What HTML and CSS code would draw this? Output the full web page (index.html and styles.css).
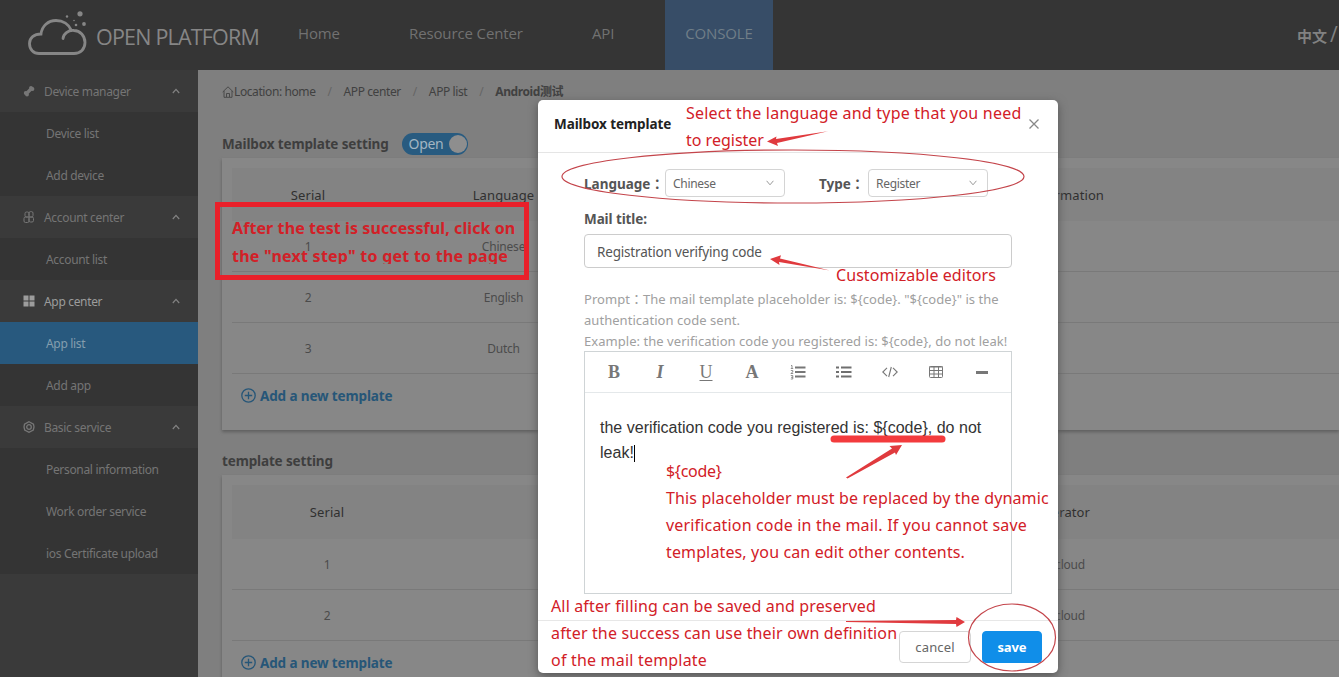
FILE: index.html
```
<!DOCTYPE html>
<html lang="en">
<head>
<meta charset="utf-8">
<title>Open Platform - Mailbox template</title>
<link rel="stylesheet" href="styles.css">
</head>
<body>
<div class="page">
  <header class="top">
    <svg class="logo" width="60" height="46" viewBox="0 0 60 46" fill="none" stroke="#868686" stroke-width="2.800" stroke-linecap="round">
      <path d="M35 26.500C35.500 22 40 18 46 18.500C52 18.500 57 24 57 30.500C57 37 52.500 41.500 46 41.500H11C5.500 41.500 1.500 37.500 1.500 31.500C1.500 26 6 22 13 22C14 14 20 8.500 28 8.500C35 8.500 41 12.500 43.500 18.500"/>
      <g fill="#868686" stroke="none"><circle cx="52" cy="1.800" r="2.600"/><circle cx="56" cy="12" r="1.900"/><circle cx="48" cy="13" r="1.300"/><circle cx="39" cy="4.500" r="1.200"/><circle cx="46" cy="8.500" r=".8"/></g>
    </svg>
    <span class="brand">OPEN PLATFORM</span>
    <nav class="nav">
      <a class="n1">Home</a><a class="n2">Resource Center</a><a class="n3">API</a><a class="n4 on">CONSOLE</a>
    </nav>
    <span class="lang">中文<i>/</i></span>
  </header>

  <aside class="side">
    <div class="group"><svg class="gi" viewBox="0 0 12 12"><path d="M2.500 9.500 9 3" stroke="#777" stroke-width="3.200"/><circle cx="2.700" cy="8" r="1.900" fill="#777"/><circle cx="4" cy="9.600" r="1.900" fill="#777"/><circle cx="8" cy="2.800" r="1.900" fill="#777"/><circle cx="9.500" cy="4" r="1.900" fill="#777"/></svg><span>Device manager</span><svg class="ch" viewBox="0 0 8 6"><path d="m.8 5 3.200-3.700L7.200 5"/></svg></div>
    <div class="item">Device list</div>
    <div class="item">Add device</div>
    <div class="group"><svg class="gi" viewBox="0 0 12 12" fill="none" stroke="#777"><rect x="2" y="1" width="4" height="5" rx="1.500"/><rect x="6" y=".6" width="4" height="5.400" rx="1.500"/><rect x="1" y="6" width="5" height="5.500" rx="1.500"/><rect x="6" y="6" width="4.500" height="5" rx="1.500"/></svg><span>Account center</span><svg class="ch" viewBox="0 0 8 6"><path d="m.8 5 3.200-3.700L7.200 5"/></svg></div>
    <div class="item">Account list</div>
    <div class="group lit"><svg class="gi" viewBox="0 0 12 12" fill="#9c9c9c"><path d="M.5.500h5v5h-5zM6.500.500h5v5h-5zM.5 6.500h5v5h-5zM6.500 6.500h5v5h-5z"/></svg><span>App center</span><svg class="ch" viewBox="0 0 8 6"><path d="m.8 5 3.200-3.700L7.200 5"/></svg></div>
    <div class="item on">App list</div>
    <div class="item">Add app</div>
    <div class="group"><svg class="gi" viewBox="0 0 12 12" fill="none" stroke="#777" stroke-width="1.300"><path d="M6 .7 10.500 3.200 11 6 10.300 9 6 11.300 1.700 9 1 6 1.500 3.200z"/><circle cx="6" cy="6" r="2.300"/></svg><span>Basic service</span><svg class="ch" viewBox="0 0 8 6"><path d="m.8 5 3.200-3.700L7.200 5"/></svg></div>
    <div class="item">Personal information</div>
    <div class="item">Work order service</div>
    <div class="item">ios Certificate upload</div>
  </aside>

  <main class="main">
    <div class="crumbs">
      <svg width="12" height="12" viewBox="0 0 12 12" fill="none" stroke="#444" stroke-width=".9"><path d="M.7 6 6 .8 11.300 6M2 5v6.300h8V5M4.500 11V7.500h3V11"/></svg><span>Location: home</span><i>/</i><span>APP center</span><i>/</i><span>APP list</span><i>/</i><b>Android测试</b>
    </div>
    <div class="heading"><h2>Mailbox template setting</h2><span class="switch">Open<i></i></span></div>
    <section class="panel first">
      <div class="row head"><span class="c1">Serial</span><span class="c2">Language</span><span class="c3">Information</span></div>
      <div class="row"><span class="c1">1</span><span class="c2">Chinese</span></div>
      <div class="row"><span class="c1">2</span><span class="c2">English</span></div>
      <div class="row"><span class="c1">3</span><span class="c2">Dutch</span></div>
      <div class="add"><svg width="15" height="15" viewBox="0 0 15 15" fill="none" stroke="#265678" stroke-width="1.300"><circle cx="7.500" cy="7.500" r="6.700"/><path d="M7.500 3.800v7.400M3.800 7.500h7.400"/></svg>Add a new template</div>
    </section>
    <div class="heading second"><h2>template setting</h2></div>
    <section class="panel operators">
      <div class="row head"><span class="c1">Serial</span><span class="c3">Operator</span></div>
      <div class="row"><span class="c1">1</span><span class="c3">cloud</span></div>
      <div class="row"><span class="c1">2</span><span class="c3">cloud</span></div>
      <div class="add"><svg width="15" height="15" viewBox="0 0 15 15" fill="none" stroke="#265678" stroke-width="1.300"><circle cx="7.500" cy="7.500" r="6.700"/><path d="M7.500 3.800v7.400M3.800 7.500h7.400"/></svg>Add a new template</div>
    </section>
  </main>

  <div class="modal">
    <div class="mhead"><h3>Mailbox template</h3><svg width="10" height="10" viewBox="0 0 10 10" stroke="#888" stroke-width="1.300"><path d="m.5.500 9 9m0-9-9 9"/></svg></div>
    <div class="mbody">
      <div class="fields">
        <label class="l1">Language：</label><div class="select">Chinese<svg width="8" height="6" viewBox="0 0 8 6"><path d="m.6.800 3.400 4 3.400-4"/></svg></div>
        <label class="l2">Type：</label><div class="select">Register<svg width="8" height="6" viewBox="0 0 8 6"><path d="m.6.800 3.400 4 3.400-4"/></svg></div>
      </div>
      <div class="mtitle">Mail title:</div>
      <div class="input">Registration verifying code</div>
      <div class="prompt"><div class="p1">Prompt：The mail template placeholder is: ${code}. "${code}" is the</div><div class="p2">authentication code sent.</div><div class="p3">Example: the verification code you registered is: ${code}, do not leak!</div></div>
      <div class="editor">
        <div class="tools">
          <span class="t">B</span><span class="t"><em>I</em></span><span class="t"><u>U</u></span><span class="t">A</span>
          <span class="t"><svg width="16" height="16" viewBox="0 0 16 16" stroke="#777" fill="none"><path stroke-width="2" d="M5 3.500h10.500M5 8h10.500M5 12.500h10.500"/><path stroke-width=".8" d="M1 1.500h1v3M.8 4.500h2.400M.8 6.500h2v1.500l-2 1.500h2.400M.8 11.500h2v3.500h-2M1 13.300h2"/></svg></span>
          <span class="t"><svg width="16" height="16" viewBox="0 0 16 16" stroke="#6f6f6f" stroke-width="2"><path d="M0 3.500h3M0 8h3M0 12.500h3M5 3.500h10.500M5 8h10.500M5 12.500h10.500"/></svg></span>
          <span class="t"><svg width="16" height="12" viewBox="0 0 16 12" stroke="#777" fill="none" stroke-width="1.100"><path d="M5 1.800.8 6 5 10.200M11 1.800 15.200 6 11 10.200M9.300 1 6.700 11"/></svg></span>
          <span class="t"><svg width="14" height="12" viewBox="0 0 14 12" stroke="#777" fill="none"><rect x=".5" y=".5" width="13" height="11" rx="1"/><path d="M0 1h14M0 4.500h14M0 8h14M5 1v11M9.500 1v11"/></svg></span>
          <span class="t"><svg width="12" height="3" viewBox="0 0 12 3"><path fill="#777" d="M0 0h12v3H0z"/></svg></span>
        </div>
        <div class="text">the verification code you registered is: ${code}, do not<br>leak!<i class="caret"></i></div>
      </div>
    </div>
    <div class="mfoot"><button class="btn">cancel</button><button class="btn save">save</button></div>
  </div>

  <div class="note boxed"><div class="b1">After the test is successful, click on</div><div class="b2">the "next step" to get to the page</div></div>
  <div class="note select-note"><div class="s1">Select the language and type that you need</div><div>to register</div></div>
  <div class="note edit-note">Customizable editors</div>
  <div class="note code-note"><div class="k0">${code}</div><div>This placeholder must be replaced by the dynamic</div><div class="k2">verification code in the mail. If you cannot save</div><div>templates, you can edit other contents.</div></div>
  <div class="note save-note"><div>All after filling can be saved and preserved</div><div>after the success can use their own definition</div><div class="v3">of the mail template</div></div>
  <svg class="marks" width="1339" height="677" viewBox="0 0 1339 677" fill="none" stroke="#c4454b" stroke-width="1.200">
    <ellipse cx="793" cy="176.500" rx="231" ry="26.500"/>
    <ellipse cx="1012" cy="637.500" rx="43.500" ry="33.500"/>
    <path d="M834 439h108" stroke="#f33b3d" stroke-width="7" stroke-linecap="round"/>
    <g fill="#e03a3e" stroke="none">
      <path d="M767 141.500 776.500 136.500 776 139 828 131.300 777 143 778 146z"/>
      <path d="M770 259 781 255.300 780 258.500 830 270.500 779 262 779.500 265z"/>
      <path d="M902 445 889.500 446 892 448.500 846 477.500 847.500 478.500 895 452.500 896 455z"/>
      <path d="M965 622 956.500 617 956 620 846 621 846 622 956 624 956.500 627z"/>
    </g>
  </svg>
</div>
</body>
</html>
```
FILE: styles.css
```
* { box-sizing: border-box; }
body { margin: 0; font-family: "Noto Sans", "Noto Sans CJK SC", sans-serif; }
i { font-style: normal; }
h2, h3 { margin: 0; }
.page { position: relative; width: 1339px; height: 677px; overflow: hidden; display: grid; grid-template: 70px 607px / 198px 1141px; background: #7f7f7f; white-space: nowrap; }
.top { grid-column: 1 / 3; background: #353535; display: flex; color: #818181; }
.logo { margin: 12px 0 0 28px; flex: none; overflow: visible; }
.brand { width: 190px; padding-left: 8px; font: 21.500px/74px "Open Sans", sans-serif; letter-spacing: -.8px; color: #868686; }
.nav { display: flex; width: 495px; font: 15px/66px "Open Sans", sans-serif; letter-spacing: -.12px; color: #717171; }
.nav a { display: block; }
.n1 { width: 124px; padding-left: 20px; }
.n2 { width: 178px; padding-left: 7px; }
.n3 { width: 85px; padding-left: 12px; }
.n4 { width: 108px; text-align: center; letter-spacing: -.1px; }
.nav .n4 { letter-spacing: -.15px; }
.nav .on { background: #374d67; color: #707e87; }
.lang { margin-left: auto; width: 42px; font: bold 15px/72px "Noto Sans CJK SC", sans-serif; }
.lang i { margin-left: 3px; font: 21px "Open Sans", sans-serif; }

.side { background: #3a3a3a; font-size: 12px; color: #757575; letter-spacing: -.33px; }
.group { height: 42px; display: flex; align-items: center; padding: 0 18px 0 23px; }
.group span { flex: 1; padding-left: 9px; }
.gi { width: 12px; height: 12px; }
.ch { width: 8px; height: 6px; fill: none; stroke: #828282; stroke-width: 1.200; }
.lit { color: #9c9c9c; }
.item { height: 42px; line-height: 43px; padding-left: 46px; background: #343434; }
.item.on { background: #28597e; color: #849eae; }

.main { overflow: hidden; padding-left: 24px; }
.crumbs { height: 43px; display: flex; align-items: center; font-size: 12px; letter-spacing: -.4px; color: #414141; }
.crumbs i { width: 28px; text-align: center; color: #656565; }
.crumbs b { line-height: 17px; }
.heading { height: 45px; display: flex; align-items: center; padding-top: 16px; }
h2 { font-size: 13.500px; line-height: 20px; letter-spacing: -.14px; color: #3e3e3e; }
.first-title { padding-top: 14px; }
.heading .switch { margin-left: 13px; width: 66px; height: 22px; border-radius: 11px; background: #285b80; color: #a2b5c2; font-size: 14px; letter-spacing: -.3px; line-height: 22px; padding: 0 1px 0 7px; display: flex; align-items: center; justify-content: space-between; margin-top: 1px; }
.switch i { width: 18px; height: 18px; border-radius: 50%; background: #8e8e8e; }
.panel { background: #878787; padding: 10px 0 0 10px; box-shadow: 0 2px 3px #5f5f5f; }
.first { height: 272px; }
.operators { height: 240px; }
.row { height: 51px; display: flex; align-items: center; border-bottom: 1px solid #797979; font-size: 12px; letter-spacing: -.2px; color: #4b4b4b; }
.row span { text-align: center; }
.row.head { height: 53px; background: #838383; border: 0; font-size: 13px; letter-spacing: .1px; color: #303030; }
.c1 { width: 152px; }
.c2 { width: 239px; }
.row .c3 { width: 481px; text-align: right; }
.operators .c1 { width: 190px; }
.operators .c3 { width: 663px; }
.operators .head .c3 { width: 668px; }
.operators .row.head { height: 54px; }
.add { height: 43px; display: flex; align-items: center; gap: 4px; padding-left: 9px; color: #265678; font-weight: bold; font-size: 13.500px; letter-spacing: -.13px; }
.heading.second { padding-top: 17px; }

.modal { position: absolute; left: 538px; top: 100px; width: 520px; height: 573px; background: #fff; border-radius: 5px; box-shadow: 0 3px 10px #555; display: flex; flex-direction: column; }
.mhead { height: 53px; border-bottom: 1px solid #e5e5e5; display: flex; align-items: center; justify-content: space-between; padding: 0 19px 4px 16px; }
h3 { font-size: 13.500px; letter-spacing: -.08px; color: #222; }
.mbody { height: 467px; padding: 15px 46px 0; }
.fields { display: flex; align-items: center; height: 30px; }
.fields label { font-family: "Noto Sans", "Noto Sans CJK TC", sans-serif; font-size: 13.500px; font-weight: bold; color: #555; }
.l1 { width: 81px; }
.l2 { width: 83px; padding-left: 34px; }
.select { width: 120px; height: 28px; border: 1px solid #d4d4d4; border-radius: 4px; display: flex; align-items: center; justify-content: space-between; padding: 0 10px 0 7px; font-size: 12px; letter-spacing: -.3px; color: #666; }
.select svg { fill: none; stroke: #999; }
.mtitle { height: 36px; font-size: 13.500px; line-height: 43px; letter-spacing: -.1px; font-weight: bold; color: #555; }
.input { height: 34px; border: 1px solid #ccc; border-radius: 4px; padding-left: 12px; font-size: 13.500px; line-height: 34px; letter-spacing: -.18px; color: #555; }
.prompt { padding-top: 21px; font-family: "Noto Sans", "Noto Sans CJK TC", sans-serif; font-size: 13px; line-height: 21px; letter-spacing: .045px; color: #a0a0a0; }
.editor { height: 243px; margin-top: -1px; border: 1px solid #cfd4d6; }
.tools { height: 41px; border-bottom: 1px solid #e4e8ea; padding-left: 6px; display: flex; align-items: center; }
.t { width: 46px; display: flex; justify-content: center; font: bold 18px "Liberation Serif", serif; color: #777; }
.t u { font-weight: normal; text-underline-offset: 2px; }
.text { padding: 22px 0 0 15px; font: 16px/25px "Liberation Sans", sans-serif; letter-spacing: .01px; color: #333; }
.caret { display: inline-block; width: 1px; height: 17px; background: #000; vertical-align: -4px; }
.mfoot { height: 53px; border-top: 1px solid #e7e7e7; display: flex; justify-content: flex-end; align-items: center; gap: 11px; padding-right: 16px; }
.btn { width: 72px; height: 32px; border: 1px solid #d5d5d5; border-radius: 4px; background: #fff; color: #666; font: 13px "Noto Sans", sans-serif; letter-spacing: .15px; padding: 0; }
.btn.save { width: 60px; background: #108ee9; border-color: #108ee9; color: #fff; font-weight: bold; letter-spacing: -.1px; }

.note { position: absolute; color: #d22027; font: 16px/27px "Noto Sans", sans-serif; }
.boxed { left: 215px; top: 202px; width: 314px; height: 78px; border: 5px solid #e9202a; padding: 7px 0 0 12px; font-weight: bold; line-height: 28px; letter-spacing: .09px; }
.b2 { height: 22px; overflow: hidden; letter-spacing: .24px; }
.select-note { left: 686px; top: 100px; }
.s1 { letter-spacing: .22px; }
.edit-note { left: 836px; top: 262px; letter-spacing: .07px; }
.code-note { left: 666px; top: 458px; letter-spacing: .13px; }
.k0 { letter-spacing: -.3px; }
.k2 { letter-spacing: .17px; }
.save-note { left: 551px; top: 593px; letter-spacing: .15px; }
.v3 { letter-spacing: .2px; }
.marks { position: absolute; left: 0; top: 0; }
```
